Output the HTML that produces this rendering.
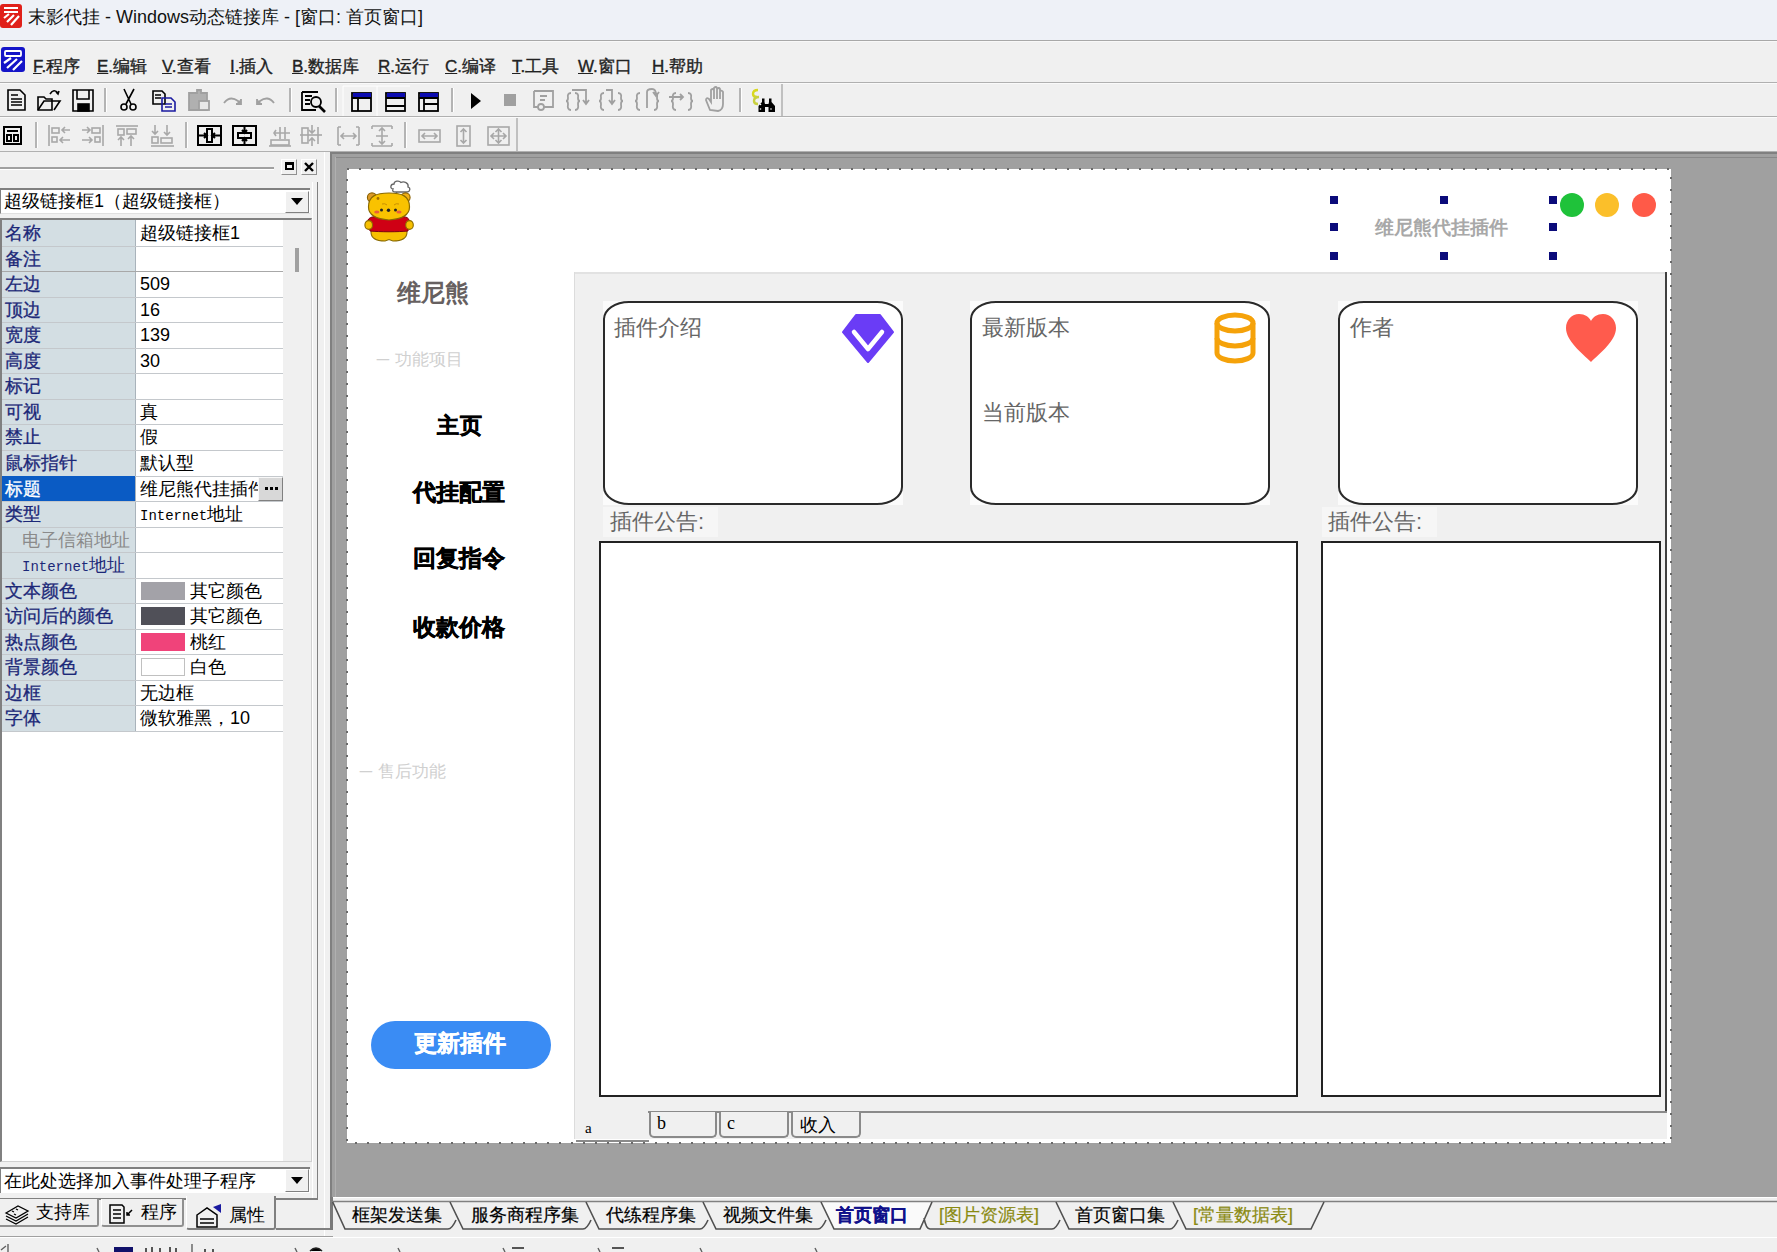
<!DOCTYPE html><html><head><meta charset="utf-8"><style>
html,body{margin:0;padding:0}
body{width:1777px;height:1252px;position:relative;overflow:hidden;background:#f0f0f0;font-family:"Liberation Sans",sans-serif}
div{box-sizing:border-box}
body *{text-spacing-trim:space-all}
</style></head><body>
<div style="position:absolute;left:0px;top:0px;width:1777px;height:40px;background:#eef1f7"></div>
<div style="position:absolute;left:0px;top:40px;width:1777px;height:1px;background:#a8a8a8"></div>
<div style="position:absolute;left:0px;top:41px;width:1777px;height:1px;background:#f8f8f8"></div>
<div style="position:absolute;left:0px;top:42px;width:1777px;height:40px;background:#f0f0f0"></div>
<div style="position:absolute;left:0px;top:82px;width:1777px;height:1px;background:#b0b0b0"></div>
<div style="position:absolute;left:0px;top:83px;width:1777px;height:1px;background:#fafafa"></div>
<div style="position:absolute;left:0px;top:116px;width:1777px;height:1px;background:#b0b0b0"></div>
<div style="position:absolute;left:0px;top:117px;width:1777px;height:1px;background:#fafafa"></div>
<div style="position:absolute;left:0px;top:151px;width:1777px;height:1px;background:#b0b0b0"></div>
<div style="position:absolute;left:28px;top:8px;font-size:18px;line-height:18px;color:#111;font-weight:normal;white-space:nowrap;font-family:'Liberation Sans',sans-serif;">末影代挂 - Windows动态链接库 - [窗口: 首页窗口]</div>
<div style="position:absolute;left:33px;top:58px;font-size:17px;line-height:17px;color:#222;font-weight:normal;white-space:nowrap;font-family:'Liberation Sans',sans-serif;-webkit-text-stroke:0.35px #222"><u>F</u>.程序</div>
<div style="position:absolute;left:97px;top:58px;font-size:17px;line-height:17px;color:#222;font-weight:normal;white-space:nowrap;font-family:'Liberation Sans',sans-serif;-webkit-text-stroke:0.35px #222"><u>E</u>.编辑</div>
<div style="position:absolute;left:162px;top:58px;font-size:17px;line-height:17px;color:#222;font-weight:normal;white-space:nowrap;font-family:'Liberation Sans',sans-serif;-webkit-text-stroke:0.35px #222"><u>V</u>.查看</div>
<div style="position:absolute;left:230px;top:58px;font-size:17px;line-height:17px;color:#222;font-weight:normal;white-space:nowrap;font-family:'Liberation Sans',sans-serif;-webkit-text-stroke:0.35px #222"><u>I</u>.插入</div>
<div style="position:absolute;left:292px;top:58px;font-size:17px;line-height:17px;color:#222;font-weight:normal;white-space:nowrap;font-family:'Liberation Sans',sans-serif;-webkit-text-stroke:0.35px #222"><u>B</u>.数据库</div>
<div style="position:absolute;left:378px;top:58px;font-size:17px;line-height:17px;color:#222;font-weight:normal;white-space:nowrap;font-family:'Liberation Sans',sans-serif;-webkit-text-stroke:0.35px #222"><u>R</u>.运行</div>
<div style="position:absolute;left:445px;top:58px;font-size:17px;line-height:17px;color:#222;font-weight:normal;white-space:nowrap;font-family:'Liberation Sans',sans-serif;-webkit-text-stroke:0.35px #222"><u>C</u>.编译</div>
<div style="position:absolute;left:512px;top:58px;font-size:17px;line-height:17px;color:#222;font-weight:normal;white-space:nowrap;font-family:'Liberation Sans',sans-serif;-webkit-text-stroke:0.35px #222"><u>T</u>.工具</div>
<div style="position:absolute;left:578px;top:58px;font-size:17px;line-height:17px;color:#222;font-weight:normal;white-space:nowrap;font-family:'Liberation Sans',sans-serif;-webkit-text-stroke:0.35px #222"><u>W</u>.窗口</div>
<div style="position:absolute;left:652px;top:58px;font-size:17px;line-height:17px;color:#222;font-weight:normal;white-space:nowrap;font-family:'Liberation Sans',sans-serif;-webkit-text-stroke:0.35px #222"><u>H</u>.帮助</div>
<svg style="position:absolute;left:0px;top:3px" width="24" height="26" viewBox="0 0 24 26">
<rect x="0" y="1" width="22" height="24" rx="3" fill="#e0201a"/>
<path d="M4 5 H18 M4 9 H18" stroke="#fff" stroke-width="2"/>
<path d="M4 15 L9 11 M7 19 L14 12 M11 22 L19 13" stroke="#fff" stroke-width="2.2"/>
</svg>
<svg style="position:absolute;left:1px;top:47px" width="25" height="26" viewBox="0 0 25 26">
<rect x="0" y="0" width="24" height="25" rx="3" fill="#1414c8"/>
<rect x="4" y="4" width="16" height="5" rx="1" fill="none" stroke="#fff" stroke-width="1.8"/>
<path d="M3 16 L10 11 M6 21 L16 12 M12 23 L21 14" stroke="#fff" stroke-width="2.2"/>
</svg>
<svg style="position:absolute;left:0px;top:83px" width="790" height="34" viewBox="0 83 790 34">
<g fill="none" stroke="#000" stroke-width="1.6">
 <path d="M8 90 H20 L25 95 V110 H8 Z"/><path d="M11 95 H18 M11 99 H22 M11 102 H22 M11 105 H22"/>
 <path d="M38 97 H44 L46 99 H52 V110 H38 Z"/><path d="M38 110 L44 101 H60 L54 110"/><path d="M50 94 Q54 88 58 93 M56 92 L58 94 L59 91" />
 <path d="M73 90 H93 V111 H73 Z"/><path d="M77 90 V99 H89 V90"/><rect x="78" y="104" width="11" height="7" fill="#000"/>
 <path d="M124 89 L131 104 M134 89 L126 104"/><circle cx="124" cy="107" r="3"/><circle cx="133" cy="107" r="3"/>
 <path d="M153 91 H162 L165 94 V104 H153 Z"/><path d="M155 95 H161 M155 98 H161"/>
 <path d="M162 98 H171 L175 102 V111 H162 Z" stroke="#1a1aa0"/><path d="M165 104 H172 M165 107 H172" stroke="#1a1aa0"/>
</g>
<g fill="none" stroke="#a0a0a0" stroke-width="1.8">
 <path d="M189 93 H197 V90 H201 V93 H207 V110 H189 Z" fill="#b0b0b0"/><rect x="199" y="101" width="10" height="9" fill="#e8e8e8"/>
 <path d="M224 103 Q230 95 238 101 L240 103" /><path d="M236 104 L241 104 L241 99" fill="#a0a0a0"/>
 <path d="M274 103 Q268 95 260 101 L258 103"/><path d="M262 104 L257 104 L257 99" fill="#a0a0a0"/>
</g>
<g fill="none" stroke="#000" stroke-width="1.8">
 <path d="M302 92 H318 M302 92 V110 H316"/><path d="M305 96 H312 M305 100 H310 M305 104 H310"/><circle cx="316" cy="102" r="5"/><path d="M319 106 L325 112" stroke-width="2.6"/>
</g>
<path d="M343 116 V86 H377 M377 116 V86 H410" fill="none" stroke="#fff" stroke-width="1"/>
<g fill="none" stroke="#000" stroke-width="1.8">
 <rect x="352" y="93" width="19" height="18"/><path d="M358 98 V111 M352 98 H371"/>
 <rect x="386" y="93" width="19" height="18"/><path d="M386 98 H405 M386 106 H405"/>
 <rect x="419" y="93" width="19" height="18"/><path d="M419 98 H438 M424 98 V111 M424 104 H438"/>
</g>
<rect x="353" y="93" width="18" height="4" fill="#0c0cb0"/><rect x="387" y="93" width="18" height="4" fill="#0c0cb0"/><rect x="420" y="93" width="18" height="4" fill="#0c0cb0"/>
<path d="M471 93 L481 101 L471 109 Z" fill="#000"/>
<rect x="504" y="94" width="12" height="12" fill="#a0a0a0"/>
<g fill="none" stroke="#a0a0a0" stroke-width="1.8">
 <path d="M534 91 H553 V107 H544 M534 91 V107 H538"/><path d="M540 96 H547 M540 100 H545"/><circle cx="541" cy="107" r="3"/>
 <path d="M571 93 Q567 93 568 98 Q568 101 566 101 Q568 101 568 104 Q567 110 571 110 M575 93 Q579 93 578 98 Q578 101 580 101 Q578 101 578 104 Q579 110 575 110"/><path d="M572 90 H586 V103 M583 100 L586 104 L589 100"/>
 <path d="M604 93 Q600 93 601 98 Q601 101 599 101 Q601 101 601 104 Q600 110 604 110 M618 93 Q622 93 621 98 Q621 101 623 101 Q621 101 621 104 Q622 110 618 110"/><path d="M606 90 H612 V103 M609 100 L612 104 L615 100"/>
 <path d="M640 93 Q636 93 637 98 Q637 101 635 101 Q637 101 637 104 Q636 110 640 110 M654 93 Q658 93 657 98 Q657 101 659 101 Q657 101 657 104 Q658 110 654 110"/><path d="M647 108 V92 Q647 89 652 89 Q656 89 656 95 M653 92 L656 96 L659 92"/>
 <path d="M676 93 Q672 93 673 98 Q673 101 671 101 Q673 101 673 104 Q672 110 676 110 M688 93 Q692 93 691 98 Q691 101 693 101 Q691 101 691 104 Q692 110 688 110"/><path d="M669 97 H683 M680 94 L683 97 L680 100"/>
 <path d="M710 110 L706 100 Q706 97 709 99 L711 102 V90 Q713 88 714 90 V99 V88 Q716 86 717 88 V99 V89 Q719 87 720 89 V99 V91 Q722 90 723 92 V104 Q723 110 718 111 Z"/>
</g>
<path d="M758 90 Q753 90 753 94 Q753 97 757 97" fill="none" stroke="#d8d820" stroke-width="2.4"/><path d="M759 97 Q754 97 754 101 Q754 104 758 104" fill="none" stroke="#c8d040" stroke-width="2.4"/>
<path d="M762 98.5 H764.5 V102 L765 104 H768.5 L769 102 V98.5 H771.5 V102 L775 106 V112 H768.5 V107 H765 V112 H758.5 V106 L762 102 Z" fill="#000"/>
<circle cx="760.5" cy="104.5" r="0.8" fill="#fff"/><circle cx="760.5" cy="109" r="0.8" fill="#fff"/><circle cx="771" cy="109" r="0.8" fill="#fff"/>
<g stroke="#a0a0a0" stroke-width="1.5"><path d="M105 88 V112 M290 88 V112 M336 88 V112 M452 88 V112 M740 88 V112"/></g>
<g stroke="#fff" stroke-width="1"><path d="M106.5 88 V112 M291.5 88 V112 M337.5 88 V112 M453.5 88 V112 M741.5 88 V112"/></g>
<path d="M782 84 V117" stroke="#b0b0b0" stroke-width="1.5"/>
</svg>
<svg style="position:absolute;left:0px;top:117px" width="530" height="35" viewBox="0 117 530 35">
<g fill="none" stroke="#000" stroke-width="2">
 <rect x="4" y="127" width="17" height="17"/><path d="M7 131 H18"/><rect x="7" y="135" width="4" height="6"/><rect x="14" y="135" width="4" height="6"/>
 <rect x="198" y="126" width="23" height="19"/><rect x="207" y="129" width="5" height="13"/><path d="M199 135.5 H206 M204 133 L207 135.5 L204 138 M220 135.5 H213 M215 133 L212 135.5 L215 138"/>
 <rect x="233" y="126" width="23" height="19"/><rect x="238" y="133" width="13" height="5"/><path d="M244.5 127 V132 M242 130 L244.5 133 L247 130 M244.5 144 V139 M242 141 L244.5 138 L247 141"/>
</g>
<g fill="none" stroke="#a8a8a8" stroke-width="1.6">
 <path d="M49 125 V146"/><rect x="52" y="128" width="7" height="5"/><rect x="52" y="137" width="5" height="5"/><path d="M62 130 H70 M65 127 L62 130 L65 133 M60 140 H70 M63 137 L60 140 L63 143"/>
 <path d="M103 125 V146"/><rect x="92" y="128" width="8" height="5"/><rect x="95" y="137" width="5" height="5"/><path d="M82 130 H90 M87 127 L90 130 L87 133 M82 140 H92 M89 137 L92 140 L89 143"/>
 <path d="M116 126 H138"/><rect x="118" y="129" width="6" height="6"/><rect x="127" y="129" width="9" height="5"/><path d="M121 137 V146 M118 140 L121 137 L124 140 M131 136 V146 M128 139 L131 136 L134 139"/>
 <path d="M151 146 H174"/><rect x="152" y="137" width="6" height="6"/><rect x="161" y="138" width="11" height="5"/><path d="M155 125 V134 M152 131 L155 134 L158 131 M167 125 V135 M164 132 L167 135 L170 132"/>
 <path d="M269 146 H291"/><rect x="271" y="140" width="18" height="5"/><path d="M274 133 H290 M276 130 L274 133 L276 136 M280 127 V139 M285 127 V139"/>
 <path d="M300 135 H322"/><rect x="302" y="128" width="6" height="15"/><path d="M312 125 V133 M309 130 L312 133 L315 130 M312 146 V138 M309 141 L312 138 L315 141 M318 127 V144"/>
 <path d="M338 127 V145 M359 127 V145 M341 127 H338 M341 145 H338 M356 127 H359 M356 145 H359 M341 136 H356 M344 133 L341 136 L344 139 M353 133 L356 136 L353 139"/>
 <path d="M372 126 H392 M372 146 H392 M372 126 V129 M392 126 V129 M372 146 V143 M392 146 V143 M382 128 V144 M379 131 L382 128 L385 131 M379 141 L382 144 L385 141 M376 136 H388"/>
 <rect x="419" y="130" width="21" height="12"/><path d="M422 136 H437 M425 133 L422 136 L425 139 M434 133 L437 136 L434 139"/>
 <rect x="457" y="126" width="13" height="20"/><path d="M463.5 129 V143 M460.5 132 L463.5 129 L466.5 132 M460.5 140 L463.5 143 L466.5 140"/>
 <rect x="488" y="127" width="21" height="18"/><path d="M491 136 H506 M498.5 129 V143 M494 133 L491 136 L494 139 M503 133 L506 136 L503 139 M495.5 132 L498.5 129 L501.5 132 M495.5 140 L498.5 143 L501.5 140"/>
</g>
<g stroke="#a0a0a0" stroke-width="1.5"><path d="M36 122 V148 M186 122 V148 M405 122 V148"/></g>
<g stroke="#fff" stroke-width="1"><path d="M37.5 122 V148 M187.5 122 V148 M406.5 122 V148"/></g>
<path d="M517 118 V151" stroke="#b0b0b0" stroke-width="1.5"/>
</svg>
<div style="position:absolute;left:0px;top:152px;width:318px;height:1080px;background:#f0f0f0"></div>
<div style="position:absolute;left:0px;top:167px;width:274px;height:2px;background:#a0a0a0"></div>
<div style="position:absolute;left:0px;top:169px;width:274px;height:1px;background:#ffffff"></div>
<div style="position:absolute;left:0px;top:188px;width:310px;height:26px;background:#fff;border-top:2px solid #808080;border-left:1px solid #808080;border-bottom:1px solid #e0e0e0"></div>
<div style="position:absolute;left:285px;top:191px;width:24px;height:22px;background:#f0f0f0;border-right:1px solid #808080;border-bottom:1px solid #808080;border-left:1px solid #fff;border-top:1px solid #fff"></div>
<div style="position:absolute;left:0px;top:218px;width:312px;height:944px;background:#fff;border-top:2px solid #808080;border-left:2px solid #808080;border-right:1px solid #d0d0d0;border-bottom:1px solid #d0d0d0"></div>
<div style="position:absolute;left:283px;top:220px;width:28px;height:941px;background:#f0f0f0"></div>
<div style="position:absolute;left:2px;top:220px;width:133px;height:941px;background:#ffffff"></div>
<div style="position:absolute;left:2px;top:220px;width:133px;height:512px;background:#d3dee3"></div>
<div style="position:absolute;left:135px;top:220px;width:1px;height:512px;background:#a9b3bb"></div>
<div style="position:absolute;left:2px;top:246px;width:281px;height:1px;background:#c4c8cc"></div>
<div style="position:absolute;left:5px;top:224px;font-size:18px;line-height:18px;color:#1c2878;font-weight:normal;white-space:nowrap;font-family:'Liberation Sans',sans-serif;-webkit-text-stroke:0.3px #1c2878">名称</div>
<div style="position:absolute;left:140px;top:224px;font-size:18px;line-height:18px;color:#000;font-weight:normal;white-space:nowrap;font-family:'Liberation Sans',sans-serif;">超级链接框1</div>
<div style="position:absolute;left:2px;top:271px;width:281px;height:1px;background:#a8a8a8"></div>
<div style="position:absolute;left:5px;top:250px;font-size:18px;line-height:18px;color:#1c2878;font-weight:normal;white-space:nowrap;font-family:'Liberation Sans',sans-serif;-webkit-text-stroke:0.3px #1c2878">备注</div>
<div style="position:absolute;left:2px;top:297px;width:281px;height:1px;background:#c4c8cc"></div>
<div style="position:absolute;left:5px;top:275px;font-size:18px;line-height:18px;color:#1c2878;font-weight:normal;white-space:nowrap;font-family:'Liberation Sans',sans-serif;-webkit-text-stroke:0.3px #1c2878">左边</div>
<div style="position:absolute;left:140px;top:275px;font-size:18px;line-height:18px;color:#000;font-weight:normal;white-space:nowrap;font-family:'Liberation Sans',sans-serif;">509</div>
<div style="position:absolute;left:2px;top:322px;width:281px;height:1px;background:#c4c8cc"></div>
<div style="position:absolute;left:5px;top:301px;font-size:18px;line-height:18px;color:#1c2878;font-weight:normal;white-space:nowrap;font-family:'Liberation Sans',sans-serif;-webkit-text-stroke:0.3px #1c2878">顶边</div>
<div style="position:absolute;left:140px;top:301px;font-size:18px;line-height:18px;color:#000;font-weight:normal;white-space:nowrap;font-family:'Liberation Sans',sans-serif;">16</div>
<div style="position:absolute;left:2px;top:348px;width:281px;height:1px;background:#c4c8cc"></div>
<div style="position:absolute;left:5px;top:326px;font-size:18px;line-height:18px;color:#1c2878;font-weight:normal;white-space:nowrap;font-family:'Liberation Sans',sans-serif;-webkit-text-stroke:0.3px #1c2878">宽度</div>
<div style="position:absolute;left:140px;top:326px;font-size:18px;line-height:18px;color:#000;font-weight:normal;white-space:nowrap;font-family:'Liberation Sans',sans-serif;">139</div>
<div style="position:absolute;left:2px;top:373px;width:281px;height:1px;background:#c4c8cc"></div>
<div style="position:absolute;left:5px;top:352px;font-size:18px;line-height:18px;color:#1c2878;font-weight:normal;white-space:nowrap;font-family:'Liberation Sans',sans-serif;-webkit-text-stroke:0.3px #1c2878">高度</div>
<div style="position:absolute;left:140px;top:352px;font-size:18px;line-height:18px;color:#000;font-weight:normal;white-space:nowrap;font-family:'Liberation Sans',sans-serif;">30</div>
<div style="position:absolute;left:2px;top:399px;width:281px;height:1px;background:#c4c8cc"></div>
<div style="position:absolute;left:5px;top:377px;font-size:18px;line-height:18px;color:#1c2878;font-weight:normal;white-space:nowrap;font-family:'Liberation Sans',sans-serif;-webkit-text-stroke:0.3px #1c2878">标记</div>
<div style="position:absolute;left:2px;top:424px;width:281px;height:1px;background:#c4c8cc"></div>
<div style="position:absolute;left:5px;top:403px;font-size:18px;line-height:18px;color:#1c2878;font-weight:normal;white-space:nowrap;font-family:'Liberation Sans',sans-serif;-webkit-text-stroke:0.3px #1c2878">可视</div>
<div style="position:absolute;left:140px;top:403px;font-size:18px;line-height:18px;color:#000;font-weight:normal;white-space:nowrap;font-family:'Liberation Sans',sans-serif;">真</div>
<div style="position:absolute;left:2px;top:450px;width:281px;height:1px;background:#c4c8cc"></div>
<div style="position:absolute;left:5px;top:428px;font-size:18px;line-height:18px;color:#1c2878;font-weight:normal;white-space:nowrap;font-family:'Liberation Sans',sans-serif;-webkit-text-stroke:0.3px #1c2878">禁止</div>
<div style="position:absolute;left:140px;top:428px;font-size:18px;line-height:18px;color:#000;font-weight:normal;white-space:nowrap;font-family:'Liberation Sans',sans-serif;">假</div>
<div style="position:absolute;left:2px;top:476px;width:281px;height:1px;background:#c4c8cc"></div>
<div style="position:absolute;left:5px;top:454px;font-size:18px;line-height:18px;color:#1c2878;font-weight:normal;white-space:nowrap;font-family:'Liberation Sans',sans-serif;-webkit-text-stroke:0.3px #1c2878">鼠标指针</div>
<div style="position:absolute;left:140px;top:454px;font-size:18px;line-height:18px;color:#000;font-weight:normal;white-space:nowrap;font-family:'Liberation Sans',sans-serif;">默认型</div>
<div style="position:absolute;left:2px;top:501px;width:281px;height:1px;background:#c4c8cc"></div>
<div style="position:absolute;left:2px;top:476px;width:133px;height:25px;background:#0a5bc4"></div>
<div style="position:absolute;left:5px;top:480px;font-size:18px;line-height:18px;color:#fff;font-weight:normal;white-space:nowrap;font-family:'Liberation Sans',sans-serif;-webkit-text-stroke:0.3px #fff">标题</div>
<div style="position:absolute;left:140px;top:480px;width:118px;overflow:hidden;font-size:18px;line-height:18px;color:#000;white-space:nowrap">维尼熊代挂插件</div>
<div style="position:absolute;left:258px;top:477px;width:25px;height:24px;background:#d8d8d8;border:1px solid #f8f8f8;border-right:1px solid #808080;border-bottom:1px solid #808080"></div>
<svg style="position:absolute;left:262px;top:486px" width="18" height="5"><rect x="3" y="1" width="3" height="3" fill="#000"/><rect x="8" y="1" width="3" height="3" fill="#000"/><rect x="13" y="1" width="3" height="3" fill="#000"/></svg>
<div style="position:absolute;left:2px;top:527px;width:281px;height:1px;background:#c4c8cc"></div>
<div style="position:absolute;left:5px;top:505px;font-size:18px;line-height:18px;color:#1c2878;font-weight:normal;white-space:nowrap;font-family:'Liberation Sans',sans-serif;-webkit-text-stroke:0.3px #1c2878">类型</div>
<div style="position:absolute;left:140px;top:505px;font-size:18px;line-height:18px;color:#000;white-space:nowrap"><span style="font-family:'Liberation Mono',monospace;font-size:14px">Internet</span>地址</div>
<div style="position:absolute;left:2px;top:552px;width:281px;height:1px;background:#c4c8cc"></div>
<div style="position:absolute;left:22px;top:531px;font-size:18px;line-height:18px;color:#8a8a8a;font-weight:normal;white-space:nowrap;font-family:'Liberation Sans',sans-serif;">电子信箱地址</div>
<div style="position:absolute;left:2px;top:578px;width:281px;height:1px;background:#c4c8cc"></div>
<div style="position:absolute;left:22px;top:556px;font-size:18px;line-height:18px;color:#1c2878;white-space:nowrap"><span style="font-family:'Liberation Mono',monospace;font-size:14px;letter-spacing:0px">Internet</span>地址</div>
<div style="position:absolute;left:2px;top:603px;width:281px;height:1px;background:#c4c8cc"></div>
<div style="position:absolute;left:5px;top:582px;font-size:18px;line-height:18px;color:#1c2878;font-weight:normal;white-space:nowrap;font-family:'Liberation Sans',sans-serif;-webkit-text-stroke:0.3px #1c2878">文本颜色</div>
<div style="position:absolute;left:141px;top:582px;width:44px;height:18px;background:#a3a2a8;border:1px solid #a3a2a8"></div>
<div style="position:absolute;left:190px;top:582px;font-size:18px;line-height:18px;color:#000;font-weight:normal;white-space:nowrap;font-family:'Liberation Sans',sans-serif;">其它颜色</div>
<div style="position:absolute;left:2px;top:629px;width:281px;height:1px;background:#c4c8cc"></div>
<div style="position:absolute;left:5px;top:607px;font-size:18px;line-height:18px;color:#1c2878;font-weight:normal;white-space:nowrap;font-family:'Liberation Sans',sans-serif;-webkit-text-stroke:0.3px #1c2878">访问后的颜色</div>
<div style="position:absolute;left:141px;top:607px;width:44px;height:18px;background:#505058;border:1px solid #505058"></div>
<div style="position:absolute;left:190px;top:607px;font-size:18px;line-height:18px;color:#000;font-weight:normal;white-space:nowrap;font-family:'Liberation Sans',sans-serif;">其它颜色</div>
<div style="position:absolute;left:2px;top:654px;width:281px;height:1px;background:#c4c8cc"></div>
<div style="position:absolute;left:5px;top:633px;font-size:18px;line-height:18px;color:#1c2878;font-weight:normal;white-space:nowrap;font-family:'Liberation Sans',sans-serif;-webkit-text-stroke:0.3px #1c2878">热点颜色</div>
<div style="position:absolute;left:141px;top:633px;width:44px;height:18px;background:#f0437a;border:1px solid #f0437a"></div>
<div style="position:absolute;left:190px;top:633px;font-size:18px;line-height:18px;color:#000;font-weight:normal;white-space:nowrap;font-family:'Liberation Sans',sans-serif;">桃红</div>
<div style="position:absolute;left:2px;top:680px;width:281px;height:1px;background:#c4c8cc"></div>
<div style="position:absolute;left:5px;top:658px;font-size:18px;line-height:18px;color:#1c2878;font-weight:normal;white-space:nowrap;font-family:'Liberation Sans',sans-serif;-webkit-text-stroke:0.3px #1c2878">背景颜色</div>
<div style="position:absolute;left:141px;top:658px;width:44px;height:18px;background:#ffffff;border:1px solid #c0c0c0"></div>
<div style="position:absolute;left:190px;top:658px;font-size:18px;line-height:18px;color:#000;font-weight:normal;white-space:nowrap;font-family:'Liberation Sans',sans-serif;">白色</div>
<div style="position:absolute;left:2px;top:705px;width:281px;height:1px;background:#c4c8cc"></div>
<div style="position:absolute;left:5px;top:684px;font-size:18px;line-height:18px;color:#1c2878;font-weight:normal;white-space:nowrap;font-family:'Liberation Sans',sans-serif;-webkit-text-stroke:0.3px #1c2878">边框</div>
<div style="position:absolute;left:140px;top:684px;font-size:18px;line-height:18px;color:#000;font-weight:normal;white-space:nowrap;font-family:'Liberation Sans',sans-serif;">无边框</div>
<div style="position:absolute;left:2px;top:731px;width:281px;height:1px;background:#c4c8cc"></div>
<div style="position:absolute;left:5px;top:709px;font-size:18px;line-height:18px;color:#1c2878;font-weight:normal;white-space:nowrap;font-family:'Liberation Sans',sans-serif;-webkit-text-stroke:0.3px #1c2878">字体</div>
<div style="position:absolute;left:140px;top:709px;font-size:18px;line-height:18px;color:#000;font-weight:normal;white-space:nowrap;font-family:'Liberation Sans',sans-serif;">微软雅黑，10</div>
<div style="position:absolute;left:295px;top:248px;width:4px;height:24px;background:#a0a0a0"></div>
<div style="position:absolute;left:4px;top:192px;font-size:18px;line-height:18px;color:#000;font-weight:normal;white-space:nowrap;font-family:'Liberation Sans',sans-serif;">超级链接框1（超级链接框）</div>
<svg style="position:absolute;left:290px;top:197px" width="14" height="10"><path d="M1 1 L13 1 L7 8 Z" fill="#000"/></svg>
<div style="position:absolute;left:281px;top:159px;width:16px;height:16px;border:1px solid #fff;border-right:1px solid #909090;border-bottom:1px solid #909090"></div>
<div style="position:absolute;left:285px;top:162px;width:9px;height:8px;border:2px solid #000;border-top-width:3px"></div>
<div style="position:absolute;left:301px;top:159px;width:16px;height:16px;border:1px solid #fff;border-right:1px solid #909090;border-bottom:1px solid #909090"></div>
<svg style="position:absolute;left:303px;top:161px" width="12" height="12"><path d="M2 2 L10 10 M10 2 L2 10" stroke="#000" stroke-width="2.4"/></svg>
<div style="position:absolute;left:317px;top:182px;width:1px;height:1018px;background:#808080"></div>
<div style="position:absolute;left:312px;top:182px;width:1px;height:1018px;background:#ffffff"></div>
<div style="position:absolute;left:324px;top:152px;width:1px;height:1085px;background:#ffffff"></div>
<div style="position:absolute;left:0px;top:1167px;width:310px;height:26px;background:#fff;border-top:2px solid #808080;border-left:1px solid #808080"></div>
<div style="position:absolute;left:4px;top:1172px;font-size:18px;line-height:18px;color:#000;font-weight:normal;white-space:nowrap;font-family:'Liberation Sans',sans-serif;">在此处选择加入事件处理子程序</div>
<div style="position:absolute;left:285px;top:1169px;width:24px;height:23px;background:#f0f0f0;border-right:1px solid #808080;border-bottom:1px solid #808080;border-left:1px solid #fff;border-top:1px solid #fff"></div>
<svg style="position:absolute;left:290px;top:1176px" width="14" height="10"><path d="M1 1 L13 1 L7 8 Z" fill="#000"/></svg>
<div style="position:absolute;left:0px;top:1198px;width:318px;height:2px;background:#808080"></div>
<div style="position:absolute;left:0px;top:1199px;width:99px;height:28px;background:#f0f0f0;border-bottom:2px solid #909090;border-right:2px solid #909090;border-radius:0 0 3px 0"></div>
<div style="position:absolute;left:101px;top:1199px;width:83px;height:28px;background:#f0f0f0;border-bottom:2px solid #909090;border-right:2px solid #909090;border-left:1px solid #fff;border-radius:0 0 3px 3px"></div>
<div style="position:absolute;left:186px;top:1196px;width:90px;height:34px;background:#f0f0f0;border-left:1px solid #fff;border-bottom:2px solid #808080;border-right:2px solid #808080;border-radius:0 0 3px 3px"></div>
<div style="position:absolute;left:276px;top:1228px;width:54px;height:2px;background:#808080"></div>
<div style="position:absolute;left:330px;top:152px;width:3px;height:1078px;background:#7a7a7a"></div>
<div style="position:absolute;left:36px;top:1203px;font-size:18px;line-height:18px;color:#000;font-weight:normal;white-space:nowrap;font-family:'Liberation Sans',sans-serif;">支持库</div>
<div style="position:absolute;left:141px;top:1203px;font-size:18px;line-height:18px;color:#000;font-weight:normal;white-space:nowrap;font-family:'Liberation Sans',sans-serif;">程序</div>
<div style="position:absolute;left:229px;top:1206px;font-size:18px;line-height:18px;color:#000;font-weight:normal;white-space:nowrap;font-family:'Liberation Sans',sans-serif;">属性</div>
<svg style="position:absolute;left:4px;top:1201px" width="26" height="24"><g fill="none" stroke="#000" stroke-width="1.3"><path d="M2 12 L14 5 L24 10 L12 17 Z"/><path d="M2 15 L12 20 L24 13"/><path d="M2 18 L12 23 L24 16"/><path d="M8 10 l2 1 M12 8 l2 1 M10 13 l2 1"/></g></svg>
<svg style="position:absolute;left:108px;top:1203px" width="28" height="22"><g fill="none" stroke="#000" stroke-width="1.5"><path d="M2 2 H14 L16 4 V20 H2 Z"/><path d="M5 7 H13 M5 11 H13 M5 15 H13"/><path d="M24 7 L19 12 M19 9 V12 H22"/></g></svg>
<svg style="position:absolute;left:195px;top:1203px" width="30" height="26"><g fill="none" stroke="#000" stroke-width="1.5"><path d="M2 12 L12 5 L22 12 V24 H2 Z"/><path d="M5 16 H19 M5 20 H19"/></g><path d="M18 4 L26 1 V10 Z" fill="#1a1aa0"/></svg>
<div style="position:absolute;left:0px;top:1236px;width:1777px;height:1px;background:#a0a0a0"></div>
<div style="position:absolute;left:0px;top:1237px;width:1777px;height:1px;background:#ffffff"></div>
<div style="position:absolute;left:330px;top:152px;width:1447px;height:1045px;background:#a0a0a0;border-top:2px solid #808080;border-left:2px solid #808080"></div>
<div style="position:absolute;left:335px;top:157px;width:1442px;height:1px;background:#888"></div>
<div style="position:absolute;left:335px;top:157px;width:1px;height:1040px;background:#b0b0b0"></div>
<div style="position:absolute;left:347px;top:169px;width:1324px;height:974px;background:#fff"></div>
<div style="position:absolute;left:333px;top:1197px;width:1444px;height:40px;background:#f0f0f0"></div>
<div style="position:absolute;left:333px;top:1197px;width:1444px;height:1px;background:#ffffff"></div>
<svg style="position:absolute;left:0;top:0" width="1777" height="1252"><path d="M821 1202 L834 1229 H920 L932 1202 Z" fill="#fafafa"/><path d="M330 1201.5 H1777" stroke="#808080" stroke-width="1.5" fill="none"/><path d="M332.7 1202 L345 1229 H448 Q452 1229 456 1220 M450 1202 L463 1229 H583 Q587 1229 591 1220 M586 1202 L599 1229 H700 Q704 1229 708 1220 M703 1202 L716 1229 H818 Q822 1229 826 1220 M821 1202 L834 1229 H920 L932 1202 M930 1229 Q926 1229 924 1218 M930 1229 H1052 Q1056 1229 1060 1220 M1056 1202 L1069 1229 H1170 Q1174 1229 1178 1220 M1173 1202 L1186 1229 H1311 L1324 1202" stroke="#505050" stroke-width="1.6" fill="none"/></svg>
<div style="position:absolute;left:352px;top:1206px;font-size:18px;line-height:18px;color:#000;font-weight:normal;white-space:nowrap;-webkit-text-stroke:0.2px #000">框架发送集</div>
<div style="position:absolute;left:471px;top:1206px;font-size:18px;line-height:18px;color:#000;font-weight:normal;white-space:nowrap;-webkit-text-stroke:0.2px #000">服务商程序集</div>
<div style="position:absolute;left:606px;top:1206px;font-size:18px;line-height:18px;color:#000;font-weight:normal;white-space:nowrap;-webkit-text-stroke:0.2px #000">代练程序集</div>
<div style="position:absolute;left:723px;top:1206px;font-size:18px;line-height:18px;color:#000;font-weight:normal;white-space:nowrap;-webkit-text-stroke:0.2px #000">视频文件集</div>
<div style="position:absolute;left:836px;top:1206px;font-size:18px;line-height:18px;color:#10108a;font-weight:bold;white-space:nowrap;-webkit-text-stroke:0.2px #10108a">首页窗口</div>
<div style="position:absolute;left:939px;top:1206px;font-size:18px;line-height:18px;color:#8a8a10;font-weight:normal;white-space:nowrap;-webkit-text-stroke:0.2px #8a8a10">[图片资源表]</div>
<div style="position:absolute;left:1075px;top:1206px;font-size:18px;line-height:18px;color:#000;font-weight:normal;white-space:nowrap;-webkit-text-stroke:0.2px #000">首页窗口集</div>
<div style="position:absolute;left:1193px;top:1206px;font-size:18px;line-height:18px;color:#8a8a10;font-weight:normal;white-space:nowrap;-webkit-text-stroke:0.2px #8a8a10">[常量数据表]</div>
<div style="position:absolute;left:0px;top:1238px;width:1777px;height:14px;background:#f0f0f0"></div>
<svg style="position:absolute;left:0;top:1238px" width="1777" height="14"><g stroke="#606060" stroke-width="1.4" fill="none"><path d="M6 8 L1 12 M8 6 V14 M97 10 L99 14 M192 6 V14 M295 10 L297 14 M398 10 L400 14 M503 10 L505 14 M598 10 L600 14 M700 10 L702 14 M815 10 L817 14"/></g><rect x="114" y="9" width="19" height="6" fill="#10106a"/><path d="M146 14 V10 M152 14 V9 M160 14 V10 M170 14 V9 M176 14 V10 M205 14 V11 M213 14 V11 M310 13 Q316 7 322 13 M512 10 H524 M612 10 H624" stroke="#222" stroke-width="1.5"/></svg>
<svg style="position:absolute;left:346px;top:168px" width="1326" height="976"><rect x="1" y="1" width="1324" height="974" fill="none" stroke="#6a6a6a" stroke-width="2" stroke-dasharray="2 10"/></svg>
<svg style="position:absolute;left:362px;top:178px" width="54" height="66" viewBox="0 0 54 66">
<path d="M31 11 C28 11 28 6 32 6 C32 3 37 2 39 4.5 C42 3 47 5 46 9 C49 10 48 14 45 14 L34 14 C31 14 30 13 31 11 Z M35 14 L34 16" fill="#fff" stroke="#666" stroke-width="1.3"/>
<path d="M9 54 C9 50 14 50 27 50 C40 50 45 50 45 54 C45 61 38 63 31 63 L27 61.5 L23 63 C16 63 9 61 9 54 Z" fill="#f7c000" stroke="#8a6a00" stroke-width="1.1"/>
<path d="M6 42 C8 38 14 38 27 39 C40 38 46 38 47 42 L46 53 C36 54 18 54 8 53 Z" fill="#cf0014" stroke="#7a0010" stroke-width="1"/>
<ellipse cx="6.7" cy="47" rx="3.8" ry="4.4" fill="#f7c000" stroke="#8a6a00" stroke-width="1.1"/>
<ellipse cx="47.5" cy="47" rx="3.8" ry="4.4" fill="#f7c000" stroke="#8a6a00" stroke-width="1.1"/>
<circle cx="10" cy="19.5" r="4.6" fill="#dc9a28" stroke="#8a6000" stroke-width="1.1"/>
<circle cx="43.5" cy="19.5" r="4.6" fill="#f0b018" stroke="#8a6000" stroke-width="1.1"/>
<path d="M6.5 29 C6.5 18 14 15 27 15 C40 15 47.5 18 47.5 29 C47.5 37 40 41 27 42 C14 41 6.5 37 6.5 29 Z" fill="#f9c200" stroke="#8a6a00" stroke-width="1.2"/>
<path d="M20 26 Q23 25 25 27 M32 27 Q34 25 37 26" stroke="#c89000" stroke-width="1" fill="none"/>
<circle cx="19.5" cy="32" r="1.5" fill="#222"/><circle cx="33.5" cy="32" r="1.5" fill="#222"/><circle cx="26.5" cy="32.3" r="1.7" fill="#222"/>
<ellipse cx="14.8" cy="34" rx="2.6" ry="1.6" fill="#e8603a"/><ellipse cx="37" cy="34" rx="2.6" ry="1.6" fill="#e8603a"/>
<circle cx="16" cy="20.5" r="1.4" fill="#a07000"/>
</svg>
<div style="position:absolute;left:1375px;top:218px;font-size:19px;line-height:19px;color:#a8a8a8;font-weight:bold;white-space:nowrap;font-family:'Liberation Sans',sans-serif;">维尼熊代挂插件</div>
<div style="position:absolute;left:1330px;top:196px;width:8px;height:8px;background:#0b0b7a"></div>
<div style="position:absolute;left:1330px;top:223px;width:8px;height:8px;background:#0b0b7a"></div>
<div style="position:absolute;left:1330px;top:252px;width:8px;height:8px;background:#0b0b7a"></div>
<div style="position:absolute;left:1440px;top:196px;width:8px;height:8px;background:#0b0b7a"></div>
<div style="position:absolute;left:1440px;top:252px;width:8px;height:8px;background:#0b0b7a"></div>
<div style="position:absolute;left:1549px;top:196px;width:8px;height:8px;background:#0b0b7a"></div>
<div style="position:absolute;left:1549px;top:223px;width:8px;height:8px;background:#0b0b7a"></div>
<div style="position:absolute;left:1549px;top:252px;width:8px;height:8px;background:#0b0b7a"></div>
<div style="position:absolute;left:1559.5px;top:193px;width:24px;height:24px;border-radius:50%;background:#1fc23a"></div>
<div style="position:absolute;left:1595px;top:193px;width:24px;height:24px;border-radius:50%;background:#fbbf2a"></div>
<div style="position:absolute;left:1631.5px;top:193px;width:24px;height:24px;border-radius:50%;background:#ff5a48"></div>
<div style="position:absolute;left:397px;top:281px;font-size:24px;line-height:24px;color:#666060;font-weight:bold;white-space:nowrap;font-family:'Liberation Sans',sans-serif;">维尼熊</div>
<div style="position:absolute;left:376px;top:351px;font-size:17px;line-height:17px;color:#d0d0d0;font-weight:normal;white-space:nowrap;font-family:'Liberation Sans',sans-serif;"><span style="font-size:14px">一</span> 功能项目</div>
<div style="position:absolute;left:437px;top:415px;font-size:22px;line-height:22px;color:#000;font-weight:bold;white-space:nowrap;font-family:'Liberation Sans',sans-serif;letter-spacing:1px;-webkit-text-stroke:0.5px #000">主页</div>
<div style="position:absolute;left:413px;top:481px;font-size:23px;line-height:23px;color:#000;font-weight:bold;white-space:nowrap;font-family:'Liberation Sans',sans-serif;-webkit-text-stroke:0.5px #000">代挂配置</div>
<div style="position:absolute;left:413px;top:547px;font-size:23px;line-height:23px;color:#000;font-weight:bold;white-space:nowrap;font-family:'Liberation Sans',sans-serif;-webkit-text-stroke:0.5px #000">回复指令</div>
<div style="position:absolute;left:413px;top:616px;font-size:23px;line-height:23px;color:#000;font-weight:bold;white-space:nowrap;font-family:'Liberation Sans',sans-serif;-webkit-text-stroke:0.5px #000">收款价格</div>
<div style="position:absolute;left:359px;top:763px;font-size:17px;line-height:17px;color:#d0d0d0;font-weight:normal;white-space:nowrap;font-family:'Liberation Sans',sans-serif;"><span style="font-size:14px">一</span> 售后功能</div>
<div style="position:absolute;left:371px;top:1021px;width:180px;height:48px;border-radius:24px;background:#3a8cf4"></div>
<div style="position:absolute;left:414px;top:1032px;font-size:23px;line-height:23px;color:#fff;font-weight:bold;white-space:nowrap;font-family:'Liberation Sans',sans-serif;-webkit-text-stroke:0.4px #fff">更新插件</div>
<div style="position:absolute;left:575px;top:272px;width:1092px;height:867px;background:#f0f0f0"></div>
<div style="position:absolute;left:575px;top:272px;width:1092px;height:2px;background:#e2e2e2"></div>
<div style="position:absolute;left:574px;top:272px;width:1px;height:867px;background:#dcdcdc"></div>
<div style="position:absolute;left:1665px;top:272px;width:2px;height:840px;background:#404040"></div>
<div style="position:absolute;left:603px;top:301px;width:300px;height:204px;background:#fbfbfb"></div>
<div style="position:absolute;left:603px;top:301px;width:300px;height:204px;border:2px solid #2a2a2a;border-radius:26px/18px;background:#fff"></div>
<div style="position:absolute;left:970px;top:301px;width:300px;height:204px;background:#fbfbfb"></div>
<div style="position:absolute;left:970px;top:301px;width:300px;height:204px;border:2px solid #2a2a2a;border-radius:26px/18px;background:#fff"></div>
<div style="position:absolute;left:1338px;top:301px;width:300px;height:204px;background:#fbfbfb"></div>
<div style="position:absolute;left:1338px;top:301px;width:300px;height:204px;border:2px solid #2a2a2a;border-radius:26px/18px;background:#fff"></div>
<div style="position:absolute;left:614px;top:317px;font-size:22px;line-height:22px;color:#666;font-weight:normal;white-space:nowrap;font-family:'Liberation Sans',sans-serif;">插件介绍</div>
<div style="position:absolute;left:982px;top:317px;font-size:22px;line-height:22px;color:#666;font-weight:normal;white-space:nowrap;font-family:'Liberation Sans',sans-serif;">最新版本</div>
<div style="position:absolute;left:982px;top:402px;font-size:22px;line-height:22px;color:#666;font-weight:normal;white-space:nowrap;font-family:'Liberation Sans',sans-serif;">当前版本</div>
<div style="position:absolute;left:1350px;top:317px;font-size:22px;line-height:22px;color:#666;font-weight:normal;white-space:nowrap;font-family:'Liberation Sans',sans-serif;">作者</div>
<svg style="position:absolute;left:838px;top:310px" width="60" height="56"><path d="M18 5 H42 L55 22 L30 52 L5 22 Z" fill="#6a3cf6" stroke="#6a3cf6" stroke-width="2" stroke-linejoin="round"/><path d="M16 22 L30 39 L44 22" fill="none" stroke="#fff" stroke-width="4.5" stroke-linecap="round" stroke-linejoin="round"/></svg>
<svg style="position:absolute;left:1210px;top:310px" width="52" height="56"><g fill="none" stroke="#f5a20a" stroke-width="5"><ellipse cx="25" cy="13" rx="18" ry="8"/><path d="M7 13 V43 A18 8 0 0 0 43 43 V13"/><path d="M7 28 A18 8 0 0 0 43 28"/></g></svg>
<svg style="position:absolute;left:1562px;top:310px" width="58" height="56"><path d="M29 52 C20 43 4 31 4 18 C4 10 10 4 17 4 C23 4 27 7 29 11 C31 7 35 4 41 4 C48 4 54 10 54 18 C54 31 38 43 29 52 Z" fill="#ff5b4d"/></svg>
<div style="position:absolute;left:603px;top:507px;width:115px;height:30px;background:#f6f6f6"></div>
<div style="position:absolute;left:610px;top:511px;font-size:22px;line-height:22px;color:#666;font-weight:normal;white-space:nowrap;font-family:'Liberation Sans',sans-serif;">插件公告:</div>
<div style="position:absolute;left:1322px;top:507px;width:115px;height:30px;background:#f6f6f6"></div>
<div style="position:absolute;left:1328px;top:511px;font-size:22px;line-height:22px;color:#666;font-weight:normal;white-space:nowrap;font-family:'Liberation Sans',sans-serif;">插件公告:</div>
<div style="position:absolute;left:599px;top:541px;width:699px;height:556px;background:#fff;border:2px solid #222"></div>
<div style="position:absolute;left:1321px;top:541px;width:340px;height:556px;background:#fff;border:2px solid #222"></div>
<div style="position:absolute;left:648px;top:1111px;width:1019px;height:2px;background:#8a8a8a"></div>
<div style="position:absolute;left:649px;top:1112px;width:68px;height:26px;border:2px solid #8a8a8a;border-top:none;border-radius:0 0 5px 5px;background:#f0f0f0"></div>
<div style="position:absolute;left:657px;top:1114px;font-size:18px;line-height:18px;color:#000;font-weight:normal;white-space:nowrap;font-family:'Liberation Serif',serif;">b</div>
<div style="position:absolute;left:719px;top:1112px;width:70px;height:26px;border:2px solid #8a8a8a;border-top:none;border-radius:0 0 5px 5px;background:#f0f0f0"></div>
<div style="position:absolute;left:727px;top:1114px;font-size:18px;line-height:18px;color:#000;font-weight:normal;white-space:nowrap;font-family:'Liberation Serif',serif;">c</div>
<div style="position:absolute;left:791px;top:1112px;width:70px;height:26px;border:2px solid #8a8a8a;border-top:none;border-radius:0 0 5px 5px;background:#f0f0f0"></div>
<div style="position:absolute;left:800px;top:1116px;font-size:18px;line-height:18px;color:#000;font-weight:normal;white-space:nowrap;font-family:'Liberation Sans',sans-serif;">收入</div>
<div style="position:absolute;left:585px;top:1121px;font-size:15px;line-height:15px;color:#000;font-weight:normal;white-space:nowrap;font-family:'Liberation Serif',serif;">a</div>
<div style="position:absolute;left:576px;top:1140px;width:73px;height:2px;background:#8a8a8a"></div>
</body></html>
